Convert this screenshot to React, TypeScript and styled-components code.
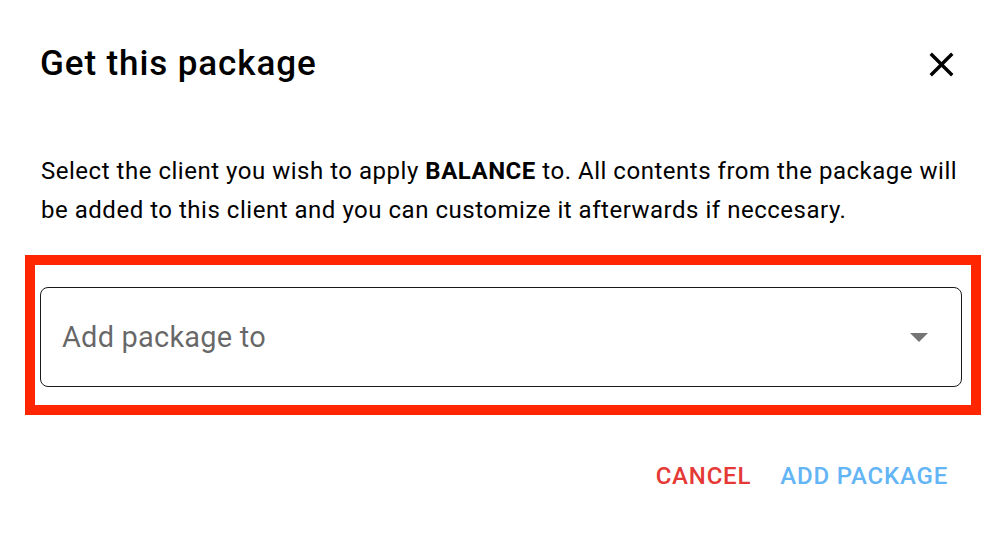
import React from 'react';
import styled, { createGlobalStyle } from 'styled-components';

const GlobalStyle = createGlobalStyle`
  html, body {
    margin: 0;
    padding: 0;
    background: #ffffff;
  }
  body {
    font-family: Roboto, "Liberation Sans", Arial, sans-serif;
    color: rgba(0, 0, 0, 0.87);
  }
`;

const Dialog = styled.div`
  width: 1000px;
  height: 538px;
  box-sizing: border-box;
  padding: 40px 38px 0 40px;
  display: flex;
  flex-direction: column;
`;

const Header = styled.div`
  display: flex;
  align-items: center;
  justify-content: space-between;
  height: 48px;
`;

const Title = styled.h2`
  margin: 0;
  font-size: 35px;
  font-weight: 500;
  line-height: 48px;
  color: #000;
  letter-spacing: 0.9px;
`;

const CloseButton = styled.button`
  border: none;
  background: none;
  padding: 0;
  width: 42px;
  height: 42px;
  display: flex;
  align-items: center;
  justify-content: center;
  cursor: pointer;
`;

const Body = styled.p`
  margin: 64px 0 0 1px;
  font-size: 24px;
  line-height: 39px;
  letter-spacing: 0.52px;
  color: #000;
  width: 925px;

  b {
    font-weight: 700;
  }
`;

const Highlight = styled.div`
  margin: 25px 0 0 -15px;
  width: 956px;
  box-sizing: border-box;
  border: 10px solid #ff2600;
  padding: 22px 9px 18px 5px;
`;

const Select = styled.div`
  height: 100px;
  box-sizing: border-box;
  border: 1px solid #1a1a1a;
  border-radius: 8px;
  display: flex;
  align-items: center;
  justify-content: space-between;
  padding: 0 33px 0 21px;
`;

const Placeholder = styled.span`
  font-size: 29px;
  letter-spacing: 0.2px;
  color: rgba(0, 0, 0, 0.6);
`;

const Caret = styled.span`
  width: 0;
  height: 0;
  border-left: 9px solid transparent;
  border-right: 9px solid transparent;
  border-top: 9px solid #757575;
`;

const Actions = styled.div`
  display: flex;
  justify-content: flex-end;
  gap: 29px;
  margin-top: 47px;
  padding-right: 14px;
`;

const ActionButton = styled.button<{ $color: string }>`
  border: none;
  background: none;
  padding: 0;
  font-family: Roboto, "Liberation Sans", Arial, sans-serif;
  font-size: 24px;
  font-weight: 500;
  text-transform: uppercase;
  letter-spacing: 0.8px;
  color: ${(p) => p.$color};
  cursor: pointer;
`;

export default function App() {
  return (
    <>
      <GlobalStyle />
      <Dialog>
        <Header>
          <Title>Get this package</Title>
          <CloseButton aria-label="close">
            <svg width="41" height="41" viewBox="0 0 24 24">
              <path
                d="M19 6.41 17.59 5 12 10.59 6.41 5 5 6.41 10.59 12 5 17.59 6.41 19 12 13.41 17.59 19 19 17.59 13.41 12z"
                fill="#000"
              />
            </svg>
          </CloseButton>
        </Header>
        <Body>
          Select the client you wish to apply <b>BALANCE</b> to. All contents from the package will be
          added to this client and you can customize it afterwards if neccesary.
        </Body>
        <Highlight>
          <Select>
            <Placeholder>Add package to</Placeholder>
            <Caret />
          </Select>
        </Highlight>
        <Actions>
          <ActionButton $color="#e53935">Cancel</ActionButton>
          <ActionButton $color="#64b5f6">Add package</ActionButton>
        </Actions>
      </Dialog>
    </>
  );
}
